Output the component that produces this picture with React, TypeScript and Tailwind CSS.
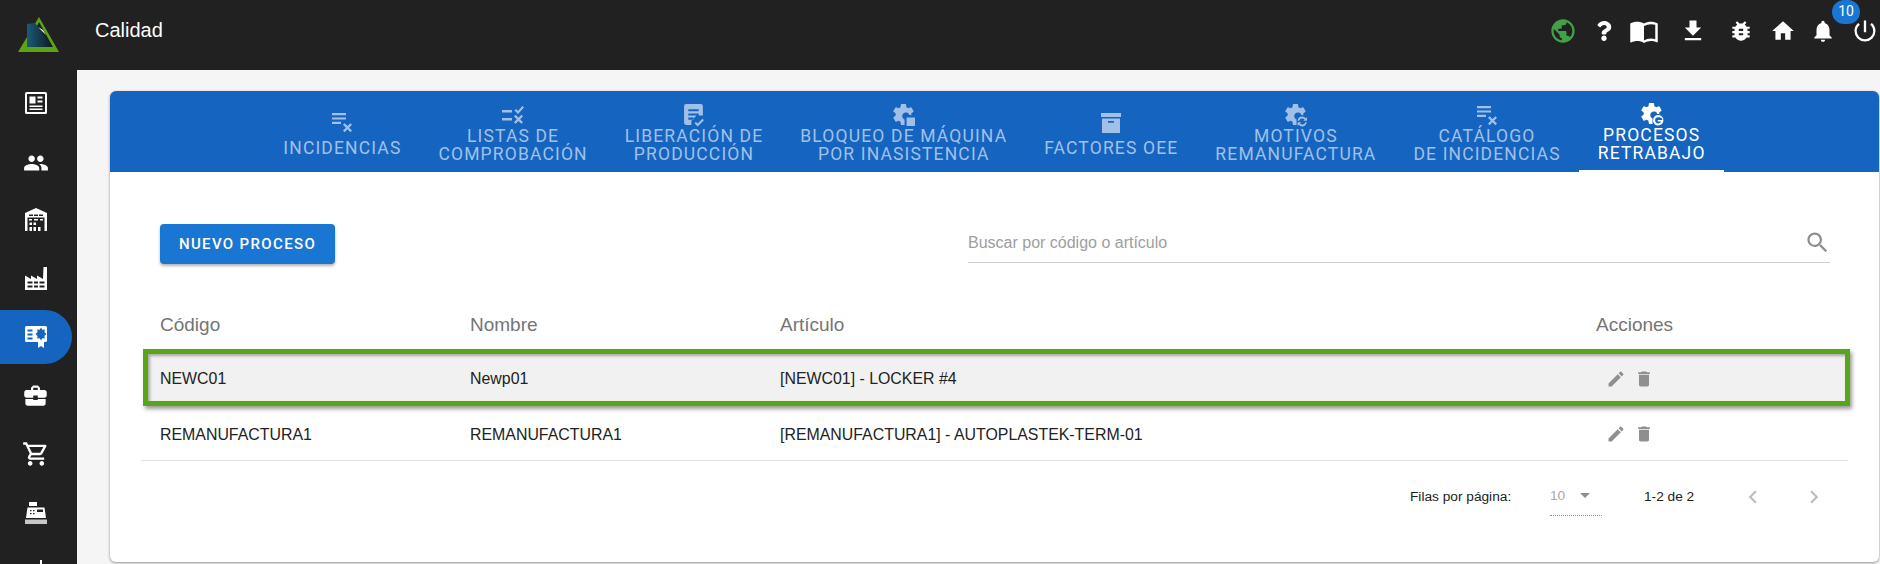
import React from "react";
import {
  MdPublic, MdImportContacts, MdFileDownload, MdBugReport, MdHome, MdNotifications, MdPowerSettingsNew,
  MdSearch, MdEdit, MdDelete, MdArrowDropDown, MdChevronLeft, MdChevronRight, MdPeople,
  MdBusinessCenter, MdOutlineShoppingCart,
} from "react-icons/md";
import { FaQuestion } from "react-icons/fa";

type P = { className?: string };
const GEAR = "M19.4 13c.04-.3.1-.65.1-1s-.05-.7-.1-1l2.1-1.65c.2-.15.25-.42.12-.64l-2-3.46c-.12-.22-.38-.3-.6-.22l-2.5 1c-.52-.4-1.08-.73-1.7-.98l-.37-2.65A.5.5 0 0 0 14 2h-4a.5.5 0 0 0-.5.42l-.37 2.65c-.62.25-1.18.58-1.7.98l-2.5-1c-.22-.08-.48 0-.6.22l-2 3.46c-.13.22-.07.49.12.64L4.57 11c-.04.32-.07.66-.07 1s.03.68.07 1l-2.11 1.65c-.19.15-.25.42-.12.64l2 3.46c.12.22.38.3.6.22l2.5-1c.52.4 1.08.73 1.7.98l.37 2.65c.05.24.26.42.5.42h3v-5.2a3.5 3.5 0 1 1 4.6-4.3H20z";

const Doc = ({ className }: P) => (
  <svg viewBox="2 1 21 23" className={className} fill="currentColor">
    <path fillRule="evenodd" d="M3 4a2 2 0 0 1 2-2h14a2 2 0 0 1 2 2v9h-6l-5 5v4H5a2 2 0 0 1-2-2V4zm4 3v2h10V7H7zm0 4v2h10v-2H7zm0 4v2h5v-2H7z" />
    <path d="M13 20.5l1.4-1.4 1.6 1.6 4.6-4.6 1.4 1.4-6 6z" />
  </svg>
);
const ListX = ({ className }: P) => (
  <svg viewBox="0 0 24 24" className={className} fill="currentColor">
    <path d="M2 3h14v2.2H2zM2 7.4h14v2.2H2zM2 11.8h9V14H2z" />
    <path d="M14.6 13.2l2.9 2.9 2.9-2.9 1.6 1.6-2.9 2.9 2.9 2.9-1.6 1.6-2.9-2.9-2.9 2.9-1.6-1.6 2.9-2.9-2.9-2.9z" />
  </svg>
);
const Checks = ({ className }: P) => (
  <svg viewBox="0 0 24 24" className={className} fill="currentColor">
    <path d="M1 7h10v2.4H1zM1 15h10v2.4H1z" />
    <path d="M13.5 7.6l1.6-1.6 1.9 1.9 4.4-4.9 1.6 1.500L17 10.900z" />
    <path d="M14.6 11.8l2.9 2.9 2.9-2.9 1.6 1.6-2.9 2.9 2.9 2.9-1.6 1.6-2.9-2.9-2.9 2.9-1.6-1.6 2.9-2.9-2.9-2.9z" />
  </svg>
);
const Archive = ({ className }: P) => (
  <svg viewBox="0 0 24 24" className={className} fill="currentColor">
    <path fillRule="evenodd" d="M2 3h20v4H2zM3 8.500h18V23H3zM9 11v1.800h6V11z" />
  </svg>
);
const GearSquare = ({ className }: P) => (
  <svg viewBox="1 1 23 23" className={className} fill="currentColor">
    <path d={GEAR} />
    <path d="M15 15h8v8h-8z" />
  </svg>
);
const GearSync = ({ className }: P) => (
  <svg viewBox="1 1 23 23" className={className} fill="currentColor">
    <path d={GEAR} />
    <path fillRule="evenodd" d="M18.500 14a4.500 4.500 0 0 1 3.400 1.600L23 14.500V18h-3.500l1.200-1.200a3 3 0 0 0-5.100 1.200h-1.500a4.500 4.500 0 0 1 4.400-4zM14 19.500h3.500l-1.200 1.200a3 3 0 0 0 5.100-1.200h1.500a4.500 4.500 0 0 1-7.800 2.400L14 23z" />
  </svg>
);
const GearE = ({ className }: P) => (
  <svg viewBox="1 1 23 23" className={className} fill="currentColor">
    <path d={GEAR} />
    <path fillRule="evenodd" d="M18.500 13.500a5 5 0 1 1-.1 10 5 5 0 0 1 .1-10zm0 2a3 3 0 0 0-3 3 3 3 0 0 0 3 3c1.200 0 2.300-.7 2.800-1.800h-2v.1h-1.400v-1.600h4.500v-.5c-.3-1.300-1.500-2.200-2.900-2.200z" />
  </svg>
);

const NewsIcon = ({ className }: P) => (
  <svg viewBox="0 0 24 24" className={className} fill="currentColor">
    <path fillRule="evenodd" d="M2.500 1h19A1.500 1.500 0 0 1 23 2.500v19a1.500 1.500 0 0 1-1.500 1.500h-19A1.500 1.500 0 0 1 1 21.500v-19A1.500 1.500 0 0 1 2.500 1zM3 3v18h18V3H3zm2.500 2.500h6v7h-6v-7zm8 0h5v2h-5v-2zm0 4h5v2h-5v-2zm-8 5h13v1.600h-13V14.500zm0 3h13v1.600h-13v-1.600z" />
  </svg>
);
const Warehouse = ({ className }: P) => (
  <svg viewBox="0 0 24 24" className={className} fill="currentColor">
    <path fillRule="evenodd" d="M12 0L1 5V23h2.500V9.500h17V23H23V5L12 0zM5 6.500h4v1.400H5zM10 6.500h4v1.400h-4zM15 6.500h4v1.400h-4zM5 11h3v1.400H5zM10 11h4v1.400h-4zM16 11h3v1.400h-3zM5.500 14.500h2.500v2.500H5.500zM9.500 14.500h2.500v2.500H9.500zM5.500 19h2.500v4H5.500zM9.500 19h2.500v4H9.500zM14 19h2.500v4H14z" />
  </svg>
);
const Factory = ({ className }: P) => (
  <svg viewBox="0 0 24 24" className={className} fill="currentColor">
    <path fillRule="evenodd" d="M19.500 0H23v23H1V8.500L7 12V8.500l6 3.500V8.500l6 3.500.5-12zM3.500 14.500v2h5v-2h-5zm6.500 0v2h4v-2h-4zm5.500 0v2h5v-2h-5zm-12 4v2h5v-2h-5zm6.500 0v2h4v-2h-4zm5.500 0v2h5v-2h-5z" />
  </svg>
);
const Quality = ({ className }: P) => (
  <svg viewBox="0 0 24 24" className={className} fill="currentColor">
    <path fillRule="evenodd" d="M2.500 1h19A1.500 1.500 0 0 1 23 2.500v13a1.500 1.500 0 0 1-1.500 1.500H20v6l-3-2-3 2v-6H2.500A1.500 1.500 0 0 1 1 15.500v-13A1.500 1.500 0 0 1 2.500 1zM3.500 4.500v2h5v-2h-5zm0 4v2h5v-2h-5zm0 4v2h5v-2h-5zM17 2.500l-1.300 2.300-2.600-.4.500 2.600L11.500 9l2.100 2-.5 2.600 2.600-.4 1.300 2.300 1.300-2.300 2.600.4-.5-2.600 2.100-2-2.100-2 .5-2.600-2.600.4L17 2.500z" />
  </svg>
);
const Register = ({ className }: P) => (
  <svg viewBox="0 0 24 24" className={className} fill="currentColor">
    <path fillRule="evenodd" d="M5 1h8v4H5zM3.500 6.500h17L22 17H2zM6 9v1.200h1.500V9zm3 0v1.200h1.500V9zM6 12v1.200h1.500V12zm3 0v1.200h1.500V12zM13 8.500V11h6V8.500z" />
    <path d="M1 18.500h22V23H1z" opacity="0.75" />
  </svg>
);
const Logo = () => (
  <svg viewBox="0 0 42 36" className="w-[42px] h-[36px]">
    <defs>
      <linearGradient id="lg" x1="0" y1="0" x2="1" y2="0">
        <stop offset="0" stopColor="#1a5b78" />
        <stop offset="1" stopColor="#0e1b20" />
      </linearGradient>
    </defs>
    <path d="M21 0L41 35H0z" fill="#5ba414" />
    <path d="M9 30L21 5l14 25z" fill="#1d1d1d" />
    <path d="M9 7l8-1 6 8 11 16H9z" fill="url(#lg)" />
    <path d="M20 10l5 3 3 5z" fill="#fff" />
  </svg>
);

const sideItems: { I: React.ComponentType<P>; c: string }[] = [
  { I: NewsIcon, c: "w-[24px] h-[24px]" },
  { I: MdPeople, c: "w-[26px] h-[26px] ml-[-1px] mt-[3px]" },
  { I: Warehouse, c: "w-[24px] h-[24px]" },
  { I: Factory, c: "w-[24px] h-[24px]" },
  { I: Quality, c: "w-[24px] h-[24px]" },
  { I: MdBusinessCenter, c: "w-[27px] h-[27px] ml-[-2px]" },
  { I: MdOutlineShoppingCart, c: "w-[28px] h-[28px] ml-[-2px]" },
  { I: Register, c: "w-[24px] h-[24px]" },
];

const tabs: { lines: string[]; Icon: React.ComponentType<P>; active?: boolean }[] = [
  { lines: ["INCIDENCIAS"], Icon: ListX },
  { lines: ["LISTAS DE", "COMPROBACIÓN"], Icon: Checks },
  { lines: ["LIBERACIÓN DE", "PRODUCCIÓN"], Icon: Doc },
  { lines: ["BLOQUEO DE MÁQUINA", "POR INASISTENCIA"], Icon: GearSquare },
  { lines: ["FACTORES OEE"], Icon: Archive },
  { lines: ["MOTIVOS", "REMANUFACTURA"], Icon: GearSync },
  { lines: ["CATÁLOGO", "DE INCIDENCIAS"], Icon: ListX },
  { lines: ["PROCESOS", "RETRABAJO"], Icon: GearE, active: true },
];

const Cells = ({ a, b, c }: { a: string; b: string; c: string }) => (
  <>
    <div className="w-[310px] shrink-0 pt-[3px]">{a}</div>
    <div className="w-[310px] shrink-0 pt-[3px]">{b}</div>
    <div className="w-[816px] shrink-0 pt-[3px]">{c}</div>
    <div className="flex items-center gap-[8px] pl-[10px] pt-[2px] text-[#8f8f8f]">
      <MdEdit className="w-[20px] h-[20px]" />
      <MdDelete className="w-[20px] h-[20px]" />
    </div>
  </>
);

export default function App() {
  return (
    <div className="w-[1880px] h-[564px] overflow-hidden flex flex-col bg-[#f5f5f5] font-['Liberation_Sans',sans-serif]">
      <header className="h-[70px] shrink-0 bg-[#212121] flex items-center text-white pb-[9px]">
        <div className="w-[77px] shrink-0 flex justify-center pl-[1px] mt-[9px]"><Logo /></div>
        <div className="ml-[18px] text-[20px] mb-[1px]">Calidad</div>
        <div className="ml-auto relative flex items-center pr-[1px]">
          <MdPublic className="w-[28px] h-[28px] text-[#43a047] mr-[19px]" />
          <FaQuestion className="w-[16px] h-[20px] mr-[17px]" />
          <MdImportContacts className="w-[30px] h-[30px] mr-[20px]" />
          <MdFileDownload className="w-[28px] h-[28px] mr-[21px]" />
          <MdBugReport className="w-[26px] h-[26px] mr-[16px]" />
          <MdHome className="w-[26px] h-[26px] mr-[14px]" />
          <MdNotifications className="w-[26px] h-[26px] mr-[15px]" />
          <MdPowerSettingsNew className="w-[28px] h-[28px]" />
          <span className="absolute right-[20px] top-[-16px] w-[28px] h-[24px] rounded-full bg-[#1976d2] text-[14px] flex items-center justify-center font-['Roboto',sans-serif]">10</span>
        </div>
      </header>
      <div className="flex-1 flex min-h-0">
        <nav className="w-[77px] shrink-0 bg-[#212121] flex flex-col pt-[3.75px] text-white overflow-hidden">
          {sideItems.map(({ I, c }, i) => (
            <div
              key={i}
              className={`shrink-0 flex items-center pl-[24px] w-[72px] ${i === 4 ? "bg-[#1565c0] rounded-r-[28px] h-[54px] my-[2.25px]" : "h-[58.5px]"}`}
            >
              <I className={c} />
            </div>
          ))}
          <div className="pl-[40px] mt-[18px] shrink-0"><div className="w-[2px] h-[10px] bg-white" /></div>
        </nav>
        <main className="flex-1 pl-[33px] pt-[21px] min-w-0">
          <section className="w-[1769px] h-[471px] bg-white rounded-[6px] shadow-[0_1px_3px_rgba(0,0,0,0.4)] overflow-hidden">
            <div className="h-[81px] bg-[#1565c0] flex justify-center font-['Roboto',sans-serif]">
              {tabs.map((t) => (
                <div
                  key={t.lines[0]}
                  className={`px-[18.5px] h-full flex flex-col items-center justify-center pt-[3px] text-[17.5px] leading-[18px] tracking-[1.15px] text-center ${t.active ? "text-white border-b-2 border-white" : "text-[#a1c0e8]"}`}
                >
                  <t.Icon className="w-[24px] h-[24px] shrink-0" />
                  {t.lines.length === 1 && <div className="h-[5px]" />}
                  {t.lines.map((l) => <div key={l} className="whitespace-nowrap">{l}</div>)}
                </div>
              ))}
            </div>
            <div className="flex items-start justify-between pt-[52px] pl-[50px] pr-[49px]">
              <button className="w-[175px] h-[40px] rounded-[4px] bg-[#1976d2] text-white text-[15px] font-medium tracking-[1.35px] font-['Roboto',sans-serif] shadow-[0_2px_3px_rgba(0,0,0,0.3)]">NUEVO PROCESO</button>
              <div className="w-[862px] h-[39px] border-b border-[#cfcfcf] flex items-start justify-between text-[#9e9e9e] text-[16px]">
                <span className="pt-[7px]">Buscar por código o artículo</span>
                <MdSearch className="w-[27px] h-[27px] text-[#8e8e8e] mr-[-1px] mt-[5px]" />
              </div>
            </div>
            <div className="mx-[31px] mt-[35px]">
              <div className="h-[50px] flex items-center pl-[19px] text-[19px] text-[#757575] pt-[3px]">
                <div className="w-[310px] shrink-0">Código</div>
                <div className="w-[310px] shrink-0">Nombre</div>
                <div className="w-[816px] shrink-0">Artículo</div>
                <div>Acciones</div>
              </div>
              <div className="h-[57px] flex items-center ml-[2px] mr-[-2px] pl-[12px] border-[5px] border-[#58a618] bg-[#f1f1f1] text-[15.9px] text-[#222] shadow-[2px_3px_4px_rgba(0,0,0,0.4),inset_2px_2px_3px_rgba(0,0,0,0.3)]">
                <Cells a="NEWC01" b="Newp01" c="[NEWC01] - LOCKER #4" />
              </div>
              <div className="h-[55px] flex items-center pl-[19px] text-[15.9px] text-[#222] border-b border-[#e0e0e0]">
                <Cells a="REMANUFACTURA1" b="REMANUFACTURA1" c="[REMANUFACTURA1] - AUTOPLASTEK-TERM-01" />
              </div>
              <div className="h-[72px] flex items-center text-[13.7px] text-[#222] pl-[1269px]">
                <span className="w-[140px]">Filas por página:</span>
                <div className="w-[52px] h-[30px] mt-[8px] mr-[42px] border-b border-dotted border-[#8a8a8a] flex items-start text-[#a8a8a8]">
                  <span>10</span>
                  <MdArrowDropDown className="w-[24px] h-[24px] ml-[8px] mt-[-3px] text-[#8f8f8f]" />
                </div>
                <span className="w-[96px]">1-2 de 2</span>
                <MdChevronLeft className="w-[26px] h-[26px] text-[#bdbdbd] mr-[35px]" />
                <MdChevronRight className="w-[26px] h-[26px] text-[#bdbdbd]" />
              </div>
            </div>
          </section>
        </main>
      </div>
    </div>
  );
}
